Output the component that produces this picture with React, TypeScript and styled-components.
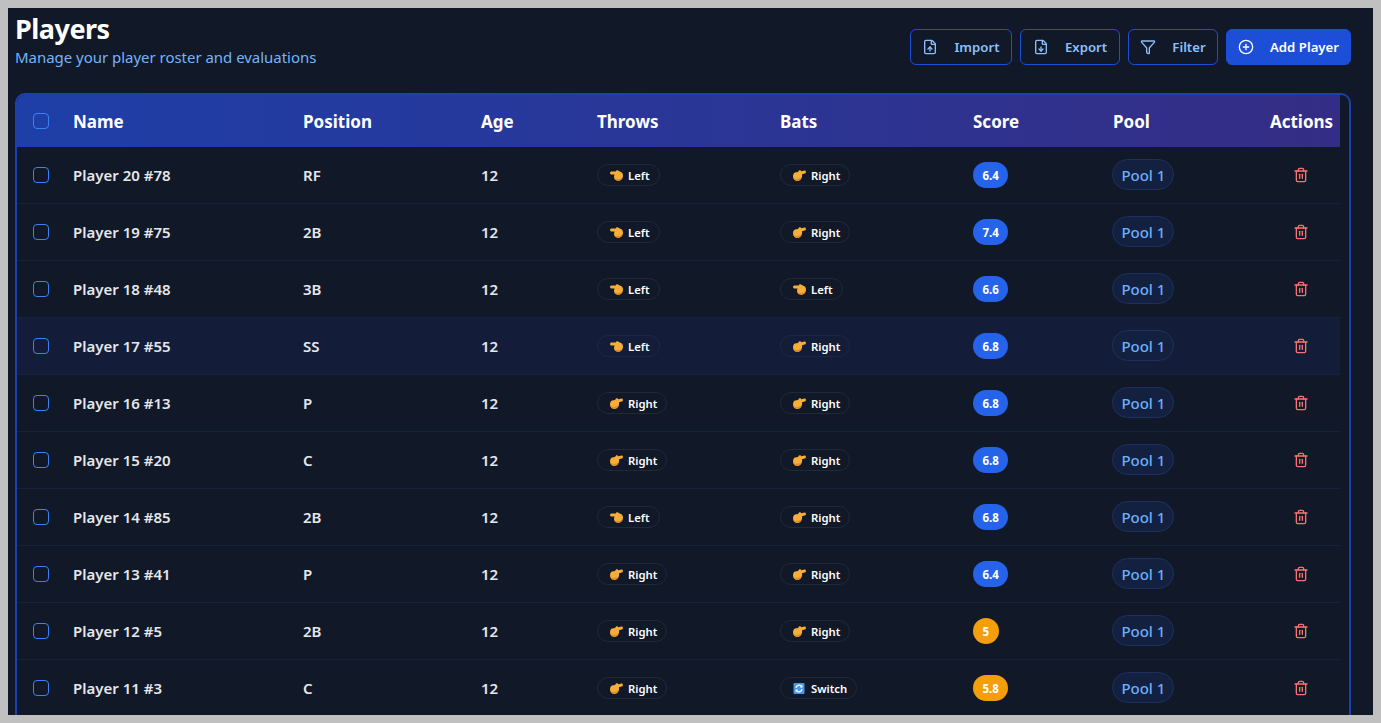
import React from "react";
import styled, { createGlobalStyle } from "styled-components";
import { FileUp, FileDown, Filter, CirclePlus, Trash2 } from "lucide-react";

const Global = createGlobalStyle`
  html, body { margin: 0; height: 100%; background: #c0c0c0; }
  body { padding: 8px; box-sizing: border-box; overflow: hidden; }
  #root { height: 100%; }
`;

const Page = styled.div`
  height: 100%;
  background: #111827;
  padding: 7px 22px 0 7px;
  box-sizing: border-box;
  overflow: hidden;
  font-family: "Noto Sans", "Open Sans", sans-serif;
  color: #fff;
`;
const Header = styled.header`
  display: flex;
  justify-content: space-between;
  align-items: flex-start;
  height: 78px;
`;
const TitleBlock = styled.div`
  display: flex;
  flex-direction: column;
`;
const Title = styled.h1`
  margin: 0;
  font-size: 27px;
  line-height: 28px;
  font-weight: 700;
  letter-spacing: -0.5px;
`;
const Subtitle = styled.p`
  margin: 0;
  padding-top: 4px;
  font-size: 15px;
  line-height: 20px;
  letter-spacing: -0.03px;
  color: #74b5f9;
`;
const Toolbar = styled.div`
  display: flex;
  gap: 8px;
  padding-top: 14px;
`;
const Button = styled.button<{ $w: number; $primary?: boolean }>`
  width: ${(p) => p.$w}px;
  height: 36px;
  box-sizing: border-box;
  display: flex;
  align-items: center;
  justify-content: center;
  gap: 16px;
  padding: 0;
  border-radius: 6px;
  border: 1px solid #1d4ed8;
  background: ${(p) => (p.$primary ? "#1d4ed8" : "transparent")};
  color: ${(p) => (p.$primary ? "#fff" : "#8cc0fb")};
  font-family: inherit;
  font-size: 13.2px;
  font-weight: 600;
`;
const Card = styled.section`
  border: 2px solid #1e40af;
  border-bottom: 0;
  border-radius: 10px 10px 0 0;
  padding-right: 9px;
  overflow: hidden;
  width: 1336px;
  box-sizing: border-box;
`;
const columns = "40px 230px 178px 116px 183px 193px 140px 166px 77px";
const HeadRow = styled.div`
  display: grid;
  grid-template-columns: ${columns};
  height: 52px;
  align-items: center;
  background: linear-gradient(90deg, #1e3fa8, #352d85);
  font-size: 17px;
  font-weight: 700;
`;
const Row = styled.div<{ $hover?: boolean }>`
  display: grid;
  grid-template-columns: ${columns};
  height: 57px;
  box-sizing: border-box;
  align-items: center;
  border-bottom: 1px solid #15223f;
  background: ${(p) => (p.$hover ? "#131d3a" : "transparent")};
  font-size: 15px;
  font-weight: 600;
  color: #e5e7eb;
`;
const Cell = styled.div<{ $center?: boolean }>`
  padding-left: ${(p) => (p.$center ? "0" : "16px")};
  display: flex;
  align-items: center;
  justify-content: ${(p) => (p.$center ? "center" : "flex-start")};
`;
const Check = styled.span`
  width: 16px;
  height: 16px;
  box-sizing: border-box;
  border: 1.5px solid #3b82f6;
  border-radius: 4px;
`;
const Hand = styled.span`
  display: inline-flex;
  gap: 5px;
  align-items: center;
  height: 22px;
  box-sizing: border-box;
  padding: 0 9px 0 12px;
  border: 1px solid #1f2937;
  border-radius: 11px;
  font-size: 11.3px;
  font-weight: 600;
  color: #fff;
`;
const Glyph = styled.svg`
  width: 13px;
  height: 11px;
  flex: none;
`;
const Score = styled.span<{ $low: boolean }>`
  height: 26px;
  min-width: 25px;
  box-sizing: border-box;
  padding: 0 9.5px;
  border-radius: 13px;
  display: inline-flex;
  align-items: center;
  justify-content: center;
  background: ${(p) => (p.$low ? "#f59e0b" : "#2563eb")};
  color: #fff;
  font-size: 11.5px;
  font-weight: 700;
`;
const Pool = styled.span`
  height: 31px;
  box-sizing: border-box;
  padding: 0 7.5px 0 8.5px;
  margin: -1px 0 0 -1px;
  border: 1px solid #1e3060;
  border-radius: 15.5px;
  background: #13203f;
  display: inline-flex;
  align-items: center;
  color: #6bb0fb;
  font-size: 15px;
  font-weight: 500;
  letter-spacing: -0.05px;
`;
const TrashIcon = styled(Trash2)`
  margin-right: 1px;
  color: #f87171;
`;

const Emoji = ({ v }: { v: string }) => {
  if (v === "Switch")
    return (
      <Glyph viewBox="0 0 13 11" aria-hidden="true">
        <rect x="0.5" y="0" width="11" height="11" rx="1" fill="#4a94ea" />
        <path d="M3 5 A3 3 0 0 1 8.2 3.2 M9 6 A3 3 0 0 1 3.8 7.8" fill="none" stroke="#fff" strokeWidth="1.2" />
        <path d="M9.4 1.6 V4.4 H6.8 Z M2.6 9.4 V6.6 H5.2 Z" fill="#fff" />
      </Glyph>
    );
  if (v === "Left")
    return (
      <Glyph viewBox="0 0 13 11" aria-hidden="true">
        <path
          d="M1.2 1.4 H5.6 L6.4 0.4 C7.4 0 8.4 0.4 8.8 1 L11.4 2.2 C12.5 2.8 13 4.2 13 5.6 C13 8.6 11 10.8 8.2 10.8 C6.2 10.8 4.6 9.8 4.2 8 C3.9 6.8 4 5.6 4.6 4.4 H1.2 C-0.3 4.4 -0.3 1.6 1.2 1.4 Z"
          fill="#f6ae38"
        />
        <path d="M4.6 8 C6.2 9.4 9.5 9.6 12.5 7.4 C11.7 9.6 10.2 10.8 8.2 10.8 C6.4 10.8 5 9.8 4.6 8 Z" fill="#e58a28" />
      </Glyph>
    );
  return (
    <Glyph viewBox="0 0 13 11" aria-hidden="true">
      <path
        d="M11.6 0.6 C13.4 0.6 13.4 3.4 11.6 3.6 L9 4.2 C9.3 5.4 9.2 6.8 8.5 8.2 C7.6 10 6.2 10.9 4.5 10.9 C2 10.9 0 9 0 6.4 C0 4.6 0.8 3.2 2 2.6 L5 2 L6 0.6 C7 -0.1 8 0.2 8.3 1.2 Z"
        fill="#f6ae38"
      />
      <path d="M0.4 8 C2.6 9.6 5.6 9.4 8.4 7.6 C7.6 9.8 6.2 10.9 4.5 10.9 C2.6 10.9 1.2 9.8 0.4 8 Z" fill="#e58a28" />
    </Glyph>
  );
};
const Handed = ({ v }: { v: string }) => (
  <Hand>
    <Emoji v={v} />
    {v}
  </Hand>
);

const players = [
  ["Player 20 #78", "RF", "Left", "Right", "6.4"],
  ["Player 19 #75", "2B", "Left", "Right", "7.4"],
  ["Player 18 #48", "3B", "Left", "Left", "6.6"],
  ["Player 17 #55", "SS", "Left", "Right", "6.8"],
  ["Player 16 #13", "P", "Right", "Right", "6.8"],
  ["Player 15 #20", "C", "Right", "Right", "6.8"],
  ["Player 14 #85", "2B", "Left", "Right", "6.8"],
  ["Player 13 #41", "P", "Right", "Right", "6.4"],
  ["Player 12 #5", "2B", "Right", "Right", "5"],
  ["Player 11 #3", "C", "Right", "Switch", "5.8"],
];

export default function App() {
  return (
    <Page>
      <Global />
      <Header>
        <TitleBlock>
          <Title>Players</Title>
          <Subtitle>Manage your player roster and evaluations</Subtitle>
        </TitleBlock>
        <Toolbar>
          <Button $w={102}><FileUp size={16} />Import</Button>
          <Button $w={100}><FileDown size={16} />Export</Button>
          <Button $w={90}><Filter size={16} />Filter</Button>
          <Button $w={125} $primary><CirclePlus size={16} />Add Player</Button>
        </Toolbar>
      </Header>
      <Card>
        <HeadRow>
          <Cell><Check /></Cell>
          <Cell>Name</Cell>
          <Cell>Position</Cell>
          <Cell>Age</Cell>
          <Cell>Throws</Cell>
          <Cell>Bats</Cell>
          <Cell>Score</Cell>
          <Cell>Pool</Cell>
          <Cell $center>Actions</Cell>
        </HeadRow>
        {players.map(([name, pos, th, bats, score], i) => (
          <Row key={name} $hover={i === 3}>
            <Cell><Check /></Cell>
            <Cell>{name}</Cell>
            <Cell>{pos}</Cell>
            <Cell>12</Cell>
            <Cell><Handed v={th} /></Cell>
            <Cell><Handed v={bats} /></Cell>
            <Cell><Score $low={parseFloat(score) < 6}>{score}</Score></Cell>
            <Cell><Pool>Pool 1</Pool></Cell>
            <Cell $center><TrashIcon size={16} /></Cell>
          </Row>
        ))}
      </Card>
    </Page>
  );
}
